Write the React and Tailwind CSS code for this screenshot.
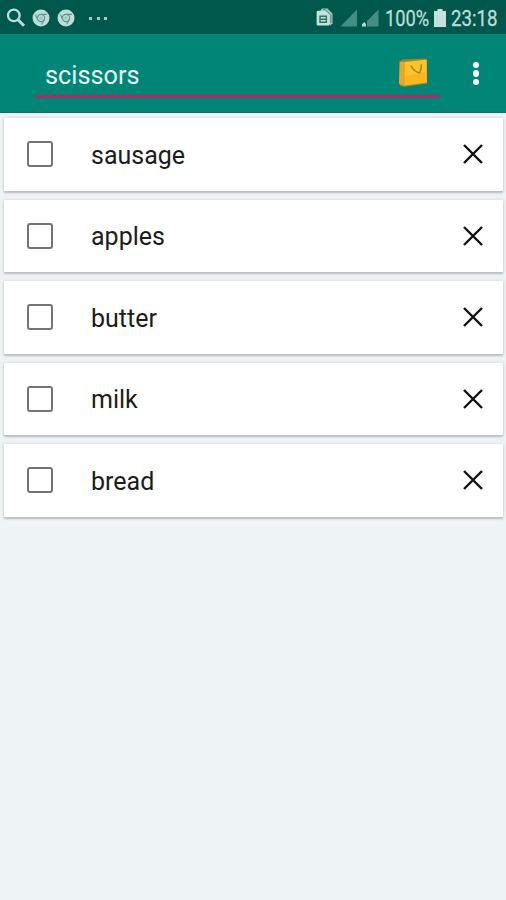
import React, { useState } from "react";

const ITEMS = ["sausage", "apples", "butter", "milk", "bread"];

function SearchIcon() {
    return (
        <svg viewBox="0 0 20 20" fill="none" stroke="currentColor" className="w-5 h-5">
            <circle cx="7.8" cy="7.4" r="5.8" strokeWidth="2.3" />
            <path d="M12 11.8l6 6" strokeWidth="3" />
        </svg>
    );
}

function ChromeIcon({ className }) {
    return (
        <svg viewBox="0 0 18 18" fill="none" className={className}>
            <circle cx="9" cy="9" r="8.5" fill="#bfddd8" />
            <circle cx="9" cy="9" r="3.6" stroke="#5d968d" strokeWidth="1.2" />
            <path d="M9 5.4H15M5.8 10.7L3.4 5.6M12.2 10.7L9.5 15.5" stroke="#5d968d" strokeWidth="1.1" />
            <circle cx="9" cy="9" r="2" fill="#a5cbc4" />
        </svg>
    );
}

function StatusBar() {
    return (
        <div className="h-[34px] shrink-0 flex items-center bg-[#00574b] text-[#bfddd8] pt-0.5">

            <div className="flex items-center pl-1.5 flex-1">
                <SearchIcon />
                <ChromeIcon className="w-[18px] h-[18px] ml-[6px]" />
                <ChromeIcon className="w-[18px] h-[18px] ml-[7px]" />

                <div className="flex gap-[4.5px] ml-[14px]">
                    <span className="w-[3px] h-[3px] bg-[#a5cbc4]" />
                    <span className="w-[3px] h-[3px] bg-[#a5cbc4]" />
                    <span className="w-[3px] h-[3px] bg-[#a5cbc4]" />
                </div>
            </div>

            {/* documents */}
            <svg viewBox="0 0 17 19" className="w-[17px] h-[19px] mb-0.5 shrink-0">
                <path d="M4.5 2.6L6 0.6h5.5l5 5.2v9.4l-2.2 2.3z" fill="#a4cac4" />
                <path d="M2 2.8h7.5l4.2 4v9.4a1.4 1.4 0 0 1-1.4 1.4H2a1.4 1.4 0 0 1-1.4-1.4v-12A1.4 1.4 0 0 1 2 2.8z" fill="#c5e1dc" />
                <path d="M7 1.8h2.5l5.4 5.4V15" fill="none" stroke="#2c7469" strokeWidth="0.8" />
                <path d="M4 8.3h6.4v6H4zM4 11.3h6.4" fill="none" stroke="#2c7469" strokeWidth="1.4" />
            </svg>

            {/* signal */}
            <svg viewBox="0 0 40 18" className="w-10 h-[18px] ml-[7px] shrink-0">
                <path d="M17 0.5V17.5H0.5z" fill="#438e83" />
                <path d="M38.5 0.5V17.5H27V12z" fill="#438e83" />
                <path d="M22 17.5v-2.3l2.4-2.2 1.6 2v2.5z" fill="#b6d8d2" />
            </svg>

            <div className="w-[49px] ml-[5px] mt-[2px] text-[22px] leading-8 whitespace-nowrap [-webkit-text-stroke:0.3px_#bfddd8]">
                <span className="inline-block origin-left scale-x-[0.83]">100%</span>
            </div>

            <svg viewBox="0 0 12 18" className="w-3 h-[18px] shrink-0">
                <path d="M3.5 0h5v2H12v16H0V2h3.5z" fill="#c5e1dc" />
            </svg>

            <div className="w-[55px] ml-[5px] mt-[2px] text-[22px] leading-8 whitespace-nowrap [-webkit-text-stroke:0.3px_#bfddd8]">
                <span className="inline-block origin-left scale-x-[0.85]">23:18</span>
            </div>
        </div>
    );
}

function BagIcon() {
    return (
        <svg viewBox="0 0 30 32" className="w-[30px] h-8">
            <path d="M1.5 4.5L6.5 4v25l-4-1.2C1.4 27.5 1 26.8 1 26z" fill="#f0a41f" />
            <path d="M1.5 4.6L4.5 2.6 27 1.4l1.8 1.2L6.5 5z" fill="#a9832c" />
            <path d="M6 5L28.8 2.6v23.2L6 29z" fill="#fcc42c" />
            <path d="M6 29V20L28.8 14v11.8z" fill="#fab81f" />
            <path d="M2 27.8L6 29.2l22.8-3.2" fill="none" stroke="#b98d24" strokeWidth="1.2" />
            <path d="M6.2 5v24" stroke="#e79f20" />
            <path d="M12.8 8.5c1.6 3 4.4 6.4 8.6 7.4 1.6-2 1.9-5.4 1.8-8.6" fill="none" stroke="#a5791f" strokeWidth="1.3" />
        </svg>
    );
}

function Toolbar({ value, onChange }) {
    return (
        <header className="h-[79px] shrink-0 flex items-start bg-[#008577] border-b border-[#087469]">

            <div className="ml-[35px] w-[404px] h-[64px] flex items-center justify-between border-b-[3px] border-[#b02a69] pl-[10px] pr-[11px] pt-[17px]">
                <input
                    value={value}
                    onChange={onChange}
                    className="w-[300px] mt-[5px] bg-transparent outline-none text-[25.3px] leading-8 text-[#e6fcf8]"
                />
                <BagIcon />
            </div>

            <button className="ml-[34px] mt-[28px] flex flex-col gap-[2.2px]">
                <span className="w-[6.2px] h-[6.2px] rounded-full bg-white" />
                <span className="w-[6.2px] h-[6.2px] rounded-full bg-white" />
                <span className="w-[6.2px] h-[6.2px] rounded-full bg-white" />
            </button>
        </header>
    );
}

function ItemRow({ name, onRemove }) {
    return (
        <li className="h-[72.5px] flex items-center bg-white rounded-[1px] pl-[23px] pr-[20px] shadow-[0_2px_2px_#b9bec0,0_0_3px_1px_#dde1e2]">

            <span className="w-[26px] h-[26px] shrink-0 border-[2.5px] border-[#747474] rounded-[3px]" />

            <span className="flex-1 ml-[38px] pt-[3px] text-[25px] leading-8 text-[#1c1c1c]">
                {name}
            </span>

            <button onClick={onRemove}>
                <svg viewBox="0 0 20 20" fill="none" stroke="#111" strokeWidth="2.4" className="w-5 h-5">
                    <path d="M1 1l18 18M19 1L1 19" />
                </svg>
            </button>
        </li>
    );
}

function App() {

    const [text, setText] = useState("scissors");

    const [items, setItems] = useState(ITEMS);

    const removeItem = (name) => setItems(items.filter((item) => item !== name));

    return (
        <div className="w-full h-screen flex flex-col overflow-hidden bg-[#eef4f5] font-[Roboto,sans-serif]">

            <StatusBar />

            <Toolbar value={text} onChange={(e) => setText(e.target.value)} />

            <ul className="flex flex-col gap-[9px] pt-[5px] pl-1 pr-[3px]">
                {items.map((item) => (
                    <ItemRow key={item} name={item} onRemove={() => removeItem(item)} />
                ))}
            </ul>
        </div>
    );
}

export default App;
